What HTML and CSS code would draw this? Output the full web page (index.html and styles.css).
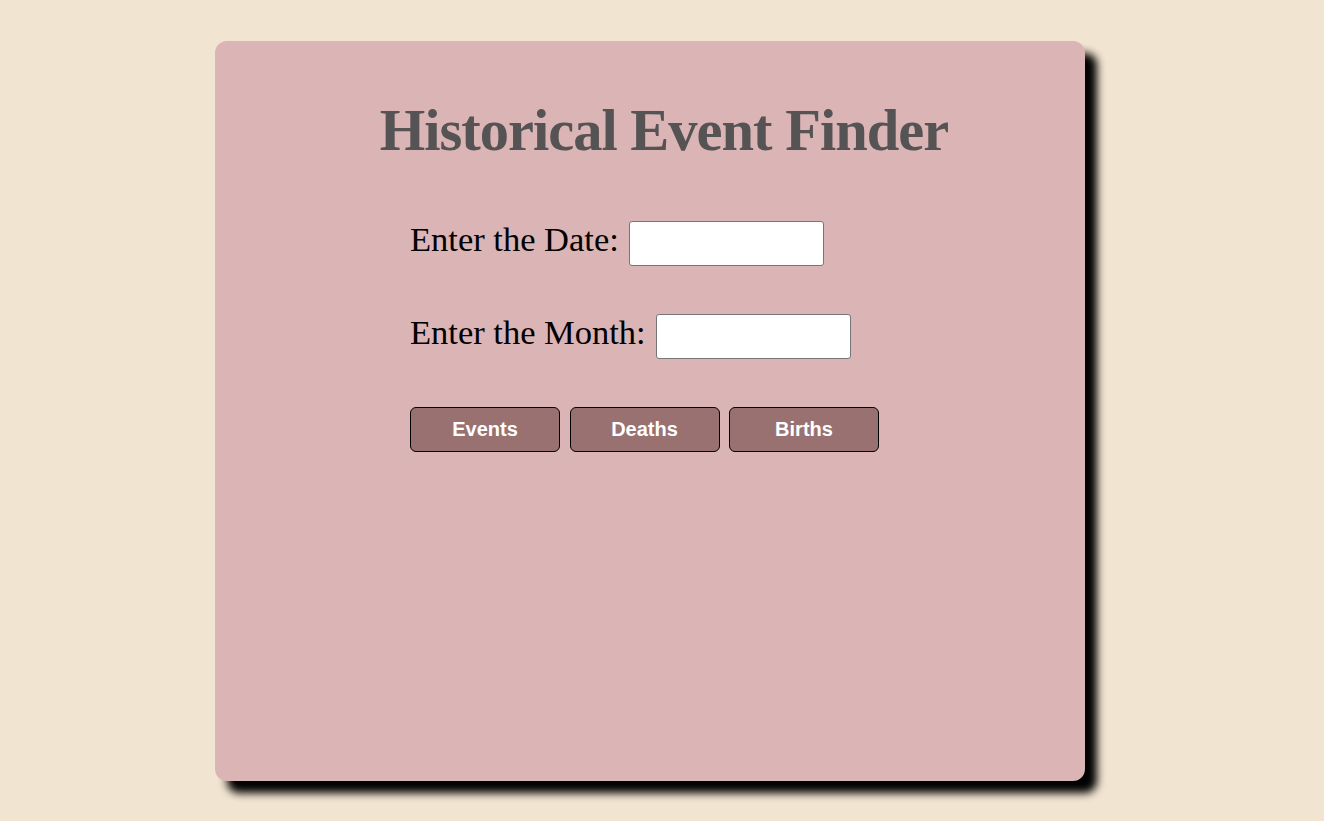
FILE: index.html
```html
<!DOCTYPE html>
<html>
<head>
<meta charset="utf-8">
<title>Historical Event Finder</title>
<link rel="stylesheet" href="styles.css">
</head>
<body>
<div class="card">
  <h1 class="title">Historical Event Finder</h1>
  <form class="form">
    <div class="row">
      <label class="label" for="date">Enter the Date:</label>
      <input class="field" id="date" type="text">
    </div>
    <div class="row">
      <label class="label" for="month">Enter the Month:</label>
      <input class="field" id="month" type="text">
    </div>
    <div class="buttons">
      <button type="button" class="btn">Events</button>
      <button type="button" class="btn">Deaths</button>
      <button type="button" class="btn">Births</button>
    </div>
  </form>
</div>
</body>
</html>
```

FILE: styles.css
```css
html, body {
  margin: 0;
  padding: 0;
}
body {
  background: #f1e4d1;
  font-family: "Liberation Serif", serif;
  min-height: 821px;
}
.card {
  box-sizing: border-box;
  margin: 41px 0 0 215px;
  width: 870px;
  height: 740px;
  background: #dbb4b5;
  border-radius: 12px;
  box-shadow: 12px 12px 8px #000;
  padding-top: 58px;
}
.title {
  margin: 0 0 0 28px;
  text-align: center;
  font-family: "Liberation Serif", serif;
  font-weight: bold;
  font-size: 58.5px;
  line-height: 64px;
  color: #555353;
  letter-spacing: -1px;
}
.form {
  margin: 58px 0 0 195px;
  display: flex;
  flex-direction: column;
}
.row {
  display: flex;
  align-items: center;
  gap: 10px;
  height: 45px;
  margin-bottom: 48px;
}
.label {
  font-size: 34.5px;
  color: #000;
  margin-bottom: 8px;
}
.field {
  box-sizing: border-box;
  width: 195px;
  height: 45px;
  border: 1px solid #767676;
  border-radius: 3px;
  background: #fff;
  margin: 0;
}
.buttons {
  display: flex;
  gap: 9.5px;
}
.btn {
  box-sizing: border-box;
  width: 150px;
  height: 45px;
  background: #9a7171;
  border: 1px solid #000;
  border-radius: 6px;
  color: #fff;
  font-family: "Liberation Sans", Arial, sans-serif;
  font-weight: bold;
  font-size: 20px;
  padding: 0;
}
```
